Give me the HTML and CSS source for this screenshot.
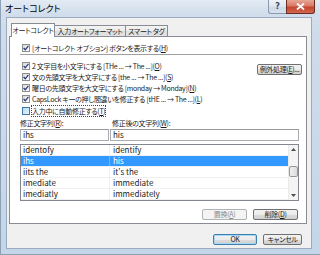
FILE: index.html
```html
<!DOCTYPE html>
<html lang="ja">
<head>
<meta charset="utf-8">
<link rel="stylesheet" href="styles.css">
</head>
<body>
<div class="window">
  <div class="titlebar">
    <span class="title">オートコレクト</span>
    <div class="caption-btns">
      <div class="cap-help">?</div>
      <div class="cap-close"><svg width="9" height="7" viewBox="0 0 9 7"><path d="M1 0.5 L8 6.5 M8 0.5 L1 6.5" stroke="#fff" stroke-width="1.8" fill="none"/></svg></div>
    </div>
  </div>
  <div class="client">
    <div class="tabs">
      <div class="tab active">オートコレクト</div>
      <div class="tab">入力オートフォーマット</div>
      <div class="tab">スマート タグ</div>
    </div>
    <div class="panel">
      <div class="row row-first">
        <span class="cb on"><svg width="6" height="6" viewBox="0 0 6 6"><path d="M0.6 3 L2.3 4.8 L5.4 0.8" stroke="#2c3f80" stroke-width="1.3" fill="none"/></svg></span>
        <span class="lbl">[オートコレクト オプション] ボタンを表示する(<u>H</u>)</span>
      </div>
      <div class="sep"></div>
      <div class="opts">
        <div class="opt-list">
          <div class="row">
            <span class="cb on"><svg width="6" height="6" viewBox="0 0 6 6"><path d="M0.6 3 L2.3 4.8 L5.4 0.8" stroke="#2c3f80" stroke-width="1.3" fill="none"/></svg></span>
            <span class="lbl">2 文字目を小文字にする [THe ... → The ...](<u>O</u>)</span>
          </div>
          <div class="row">
            <span class="cb on"><svg width="6" height="6" viewBox="0 0 6 6"><path d="M0.6 3 L2.3 4.8 L5.4 0.8" stroke="#2c3f80" stroke-width="1.3" fill="none"/></svg></span>
            <span class="lbl">文の先頭文字を大文字にする [the ... → The ...](<u>S</u>)</span>
          </div>
          <div class="row">
            <span class="cb on"><svg width="6" height="6" viewBox="0 0 6 6"><path d="M0.6 3 L2.3 4.8 L5.4 0.8" stroke="#2c3f80" stroke-width="1.3" fill="none"/></svg></span>
            <span class="lbl">曜日の先頭文字を大文字にする [monday → Monday](<u>N</u>)</span>
          </div>
          <div class="row">
            <span class="cb on"><svg width="6" height="6" viewBox="0 0 6 6"><path d="M0.6 3 L2.3 4.8 L5.4 0.8" stroke="#2c3f80" stroke-width="1.3" fill="none"/></svg></span>
            <span class="lbl">CapsLock キーの押し間違いを修正する [tHE ... → The ...](<u>L</u>)</span>
          </div>
        </div>
        <div class="btn btn-exc">例外処理(<u>E</u>)...</div>
      </div>
      <div class="row row-auto">
        <span class="cb off"></span>
        <span class="lbl focus">入力中に自動修正する(<u>T</u>)</span>
      </div>
      <div class="labels">
        <span class="lab1">修正文字列(<u>R</u>):</span>
        <span class="lab2">修正後の文字列(<u>W</u>):</span>
      </div>
      <div class="inputs">
        <div class="inp inp1">ihs</div>
        <div class="inp inp2">his</div>
      </div>
      <div class="list">
        <div class="list-rows">
          <div class="lrow"><span class="c1">identofy</span><span class="c2">identify</span></div>
          <div class="lrow sel"><span class="c1">ihs</span><span class="c2">his</span></div>
          <div class="lrow"><span class="c1">iits the</span><span class="c2">it's the</span></div>
          <div class="lrow"><span class="c1">imediate</span><span class="c2">immediate</span></div>
          <div class="lrow"><span class="c1">imediatly</span><span class="c2">immediately</span></div>
        </div>
        <div class="scroll">
          <div class="arrow"><svg width="5" height="3" viewBox="0 0 5 3"><path d="M0 3 L2.5 0 L5 3 Z" fill="#4d4d4d"/></svg></div>
          <div class="track"><div class="thumb"></div></div>
          <div class="arrow"><svg width="5" height="3" viewBox="0 0 5 3"><path d="M0 0 L2.5 3 L5 0 Z" fill="#4d4d4d"/></svg></div>
        </div>
      </div>
      <div class="list-btns">
        <div class="btn disabled">置換(<u>A</u>)</div>
        <div class="btn">削除(<u>D</u>)</div>
      </div>
    </div>
    <div class="footer">
      <div class="btn btn-ok">OK</div>
      <div class="btn btn-cancel">キャンセル</div>
    </div>
  </div>
</div>
</body>
</html>
```
FILE: styles.css
```css
* { box-sizing: border-box; margin: 0; padding: 0; }
html, body { width: 320px; height: 255px; overflow: hidden; }
body {
  font-family: "Noto Sans CJK JP", "Noto Sans", sans-serif;
  font-size: 7px;
  letter-spacing: -0.3px;
  color: #1a1a1a;
  font-feature-settings: "palt";
  background: #c6d7ea;
}
u { text-decoration: underline; text-underline-offset: 1px; }

.window {
  width: 320px;
  height: 255px;
  background: linear-gradient(180deg, #dbe5f0 0%, #cfdcea 10%, #c5d6e9 100%);
  border-left: 1px solid #8ea0b6;
  border-bottom: 1px solid #8ea0b6;
  display: flex;
  flex-direction: column;
}

.titlebar {
  height: 17px;
  display: flex;
  align-items: flex-start;
  background: linear-gradient(180deg, #e3ebf4 0%, #d6e1ed 60%, #d0dceb 100%);
}
.title {
  font-size: 9px;
  letter-spacing: 0;
  line-height: 17px;
  padding-left: 4px;
  color: #000;
}
.caption-btns {
  margin-left: auto;
  margin-right: 5px;
  display: flex;
}
.cap-help {
  width: 18px;
  height: 14px;
  border: 1px solid #8a99ad;
  border-top: none;
  border-right: none;
  border-radius: 0 0 0 3px;
  background: linear-gradient(180deg, #eef3f9 0%, #dde6f0 50%, #ccd8e6 51%, #d8e2ee 100%);
  font-family: "DejaVu Sans", sans-serif;
  font-size: 8px;
  font-weight: bold;
  color: #3c4a5c;
  text-align: center;
  line-height: 13px;
}
.cap-close {
  width: 29px;
  height: 14px;
  border: 1px solid #6b2b22;
  border-top: none;
  border-radius: 0 0 3px 0;
  background: linear-gradient(180deg, #e6a795 0%, #d97a66 45%, #c6452f 55%, #d2674f 100%);
  display: flex;
  align-items: center;
  justify-content: center;
}

.client {
  margin-left: 5px;
  width: 306px;
  height: 232px;
  background: #f0f0f0;
  border: 1px solid #9aabc0;
  display: flex;
  flex-direction: column;
}

.tabs {
  display: flex;
  align-items: flex-end;
  margin-top: 5px;
  margin-left: 4px;
  height: 13px;
  position: relative;
  z-index: 1;
}
.tab {
  height: 11px;
  border: 1px solid #898c95;
  border-bottom: none;
  border-left: none;
  background: linear-gradient(180deg, #f4f4f4 0%, #ebebeb 50%, #dddddd 51%, #e3e3e3 100%);
  line-height: 10px;
  white-space: nowrap;
  text-align: center;
}
.tab.active {
  height: 14px;
  margin-bottom: -1px;
  border-left: 1px solid #898c95;
  background: #fff;
  width: 44px;
  line-height: 13px;
}
.tab:nth-child(2) { width: 71px; }
.tab:nth-child(3) { width: 42px; }

.panel {
  margin-left: 2px;
  width: 298px;
  height: 188px;
  background: #fff;
  border: 1px solid #898c95;
  display: flex;
  flex-direction: column;
}

.row {
  display: flex;
  align-items: center;
  height: 11px;
  padding-left: 12px;
  white-space: nowrap;
}
.row-first { margin-top: 6px; height: 10px; }
.cb {
  width: 8px;
  height: 8px;
  border: 1px solid #8e8f8f;
  background: linear-gradient(135deg, #dadada 0%, #f4f4f4 70%, #fff 100%);
  display: flex;
  align-items: center;
  justify-content: center;
  margin-right: 2px;
  flex: none;
}
.cb.off {
  background: linear-gradient(135deg, #b9dbf3 0%, #d9ecf9 70%, #eaf5fc 100%);
  border-color: #3d7bad;
}
.lbl { line-height: 10px; }
.lbl.focus { outline: 1px dotted #444; outline-offset: 0; }

.sep {
  margin: 1px 3px 0 10px;
  height: 2px;
  border-top: 1px solid #a0a0a0;
  border-bottom: 1px solid #fff;
}

.opts {
  margin-top: 4px;
  display: flex;
}
.opt-list { flex: 1; }
.btn-exc {
  margin-top: 4px;
  margin-right: 4px;
  width: 52px;
}

.row-auto { margin-top: 1px; }

.labels {
  margin-top: 2px;
  height: 10px;
  display: flex;
  align-items: center;
  padding-left: 10px;
}
.lab1 { width: 92px; }

.inputs {
  margin-top: 1px;
  display: flex;
  padding-left: 10px;
}
.inp {
  height: 12px;
  border: 1px solid #abadb3;
  border-top-color: #999;
  padding-left: 2px;
  line-height: 10px;
  font-size: 8px;
  letter-spacing: 0;
}
.inp1 { width: 89px; margin-right: 1px; }
.inp2 { width: 189px; }

.list {
  margin-top: 3px;
  margin-left: 10px;
  width: 279px;
  height: 57px;
  border: 1px solid #828790;
  display: flex;
}
.list-rows { flex: 1; }
.lrow {
  height: 11px;
  display: flex;
  border-bottom: 1px solid #f0f0f0;
  font-size: 8px;
  letter-spacing: 0;
  line-height: 10px;
}
.lrow .c1 { width: 89px; padding-left: 2px; border-right: 1px solid #f0f0f0; }
.lrow .c2 { flex: 1; padding-left: 3px; }
.lrow.sel { background: #3399ff; color: #fff; }
.lrow.sel .c1 { border-right-color: #6fb4ff; }

.scroll {
  width: 10px;
  display: flex;
  flex-direction: column;
  background: #f4f4f4;
  border-left: 1px solid #eaeaea;
}
.arrow {
  height: 9px;
  display: flex;
  align-items: center;
  justify-content: center;
}
.track { flex: 1; position: relative; }
.thumb {
  position: absolute;
  left: 0;
  right: 0;
  top: 12px;
  height: 11px;
  border: 1px solid #979797;
  border-radius: 2px;
  background: linear-gradient(90deg, #f0f0f0, #dcdcdc);
}

.list-btns {
  margin-top: 8px;
  margin-right: 8px;
  display: flex;
  justify-content: flex-end;
  gap: 6px;
}

.btn {
  height: 11px;
  width: 45px;
  border: 1px solid #707070;
  border-radius: 2px;
  background: linear-gradient(180deg, #f2f2f2 0%, #ebebeb 50%, #dddddd 51%, #cfcfcf 100%);
  text-align: center;
  line-height: 9px;
  white-space: nowrap;
}
.btn.disabled {
  border-color: #adb2b5;
  background: #f4f4f4;
  color: #8a8a8a;
}

.footer {
  margin-top: 10px;
  margin-right: 9px;
  display: flex;
  justify-content: flex-end;
  gap: 6px;
}
.btn-ok {
  width: 44px;
  border-color: #3c7fb1;
  box-shadow: inset 0 0 0 1px #a7d8f4;
}
.btn-cancel { width: 39px; }
```
